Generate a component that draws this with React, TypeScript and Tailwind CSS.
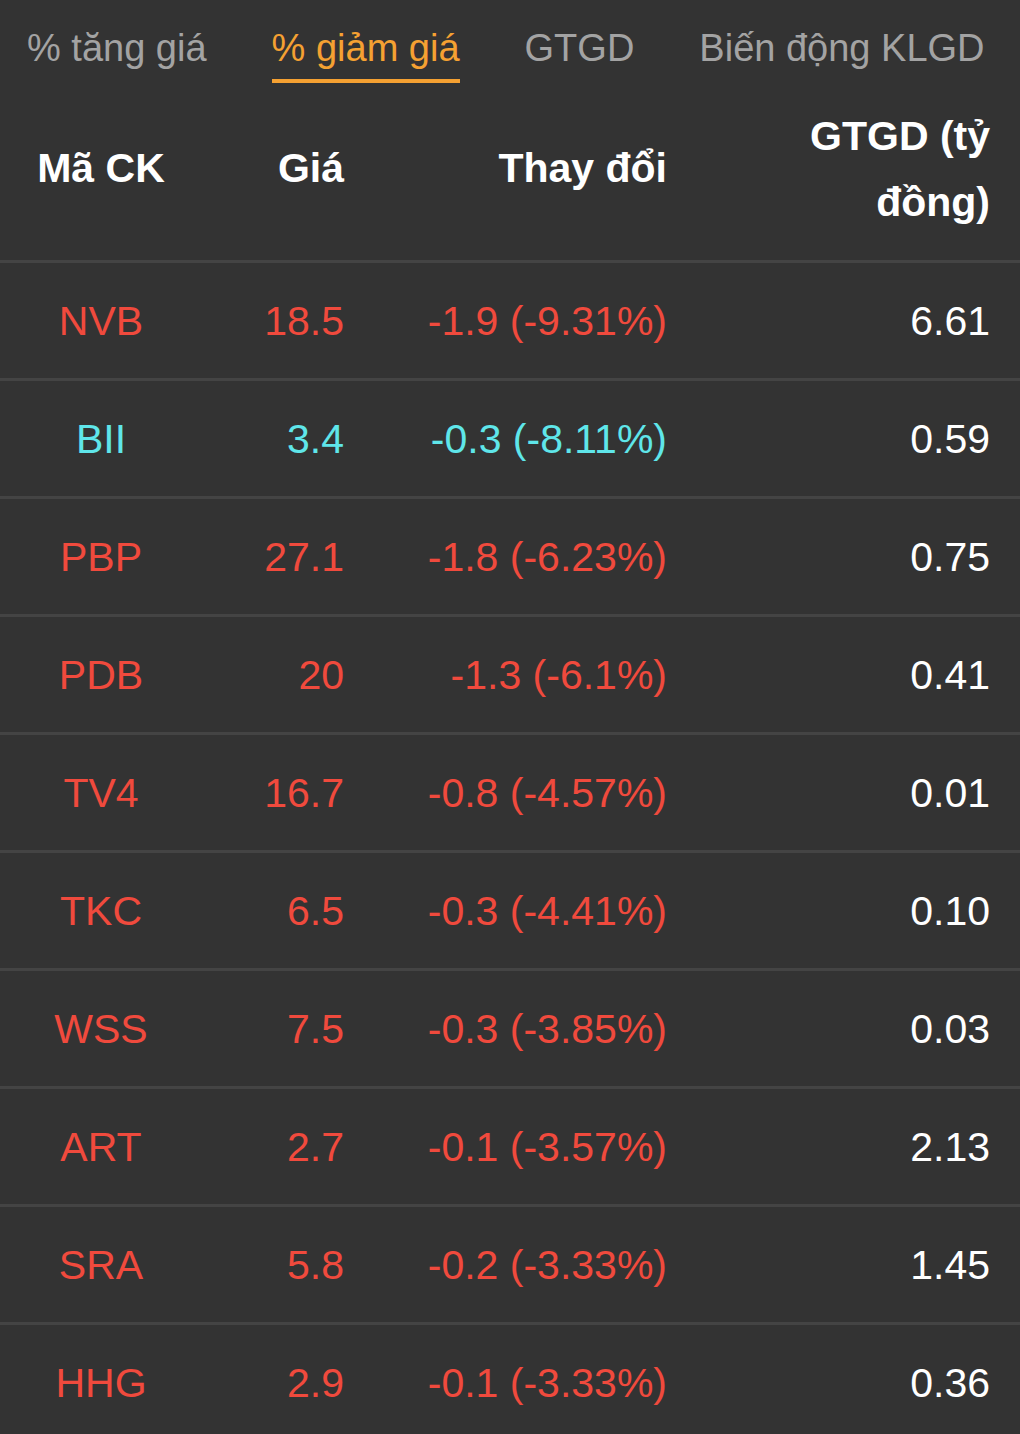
const rows = [
  { code: "NVB", price: "18.5", change: "-1.9 (-9.31%)", value: "6.61", tone: "red" },
  { code: "BII", price: "3.4", change: "-0.3 (-8.11%)", value: "0.59", tone: "cyan" },
  { code: "PBP", price: "27.1", change: "-1.8 (-6.23%)", value: "0.75", tone: "red" },
  { code: "PDB", price: "20", change: "-1.3 (-6.1%)", value: "0.41", tone: "red" },
  { code: "TV4", price: "16.7", change: "-0.8 (-4.57%)", value: "0.01", tone: "red" },
  { code: "TKC", price: "6.5", change: "-0.3 (-4.41%)", value: "0.10", tone: "red" },
  { code: "WSS", price: "7.5", change: "-0.3 (-3.85%)", value: "0.03", tone: "red" },
  { code: "ART", price: "2.7", change: "-0.1 (-3.57%)", value: "2.13", tone: "red" },
  { code: "SRA", price: "5.8", change: "-0.2 (-3.33%)", value: "1.45", tone: "red" },
  { code: "HHG", price: "2.9", change: "-0.1 (-3.33%)", value: "0.36", tone: "red" },
];

const tabs = ["% tăng giá", "% giảm giá", "GTGD", "Biến động KLGD"];

const App = () => {
  return (
    <div className="w-[1020px] min-h-[1434px] bg-[#333333] font-['Liberation_Sans',Arial,sans-serif] overflow-hidden">
      <div className="flex items-start gap-[65px] pl-[27px] h-[96px]">
        {tabs.map((t, i) => (
          <div key={t} className="flex flex-col pt-[25px]">
            <span
              className={
                i === 1
                  ? "text-[38px] leading-[46px] text-[#f5a132] whitespace-nowrap"
                  : "text-[38px] leading-[46px] text-[#a3a3a3] whitespace-nowrap"
              }
            >
              {t}
            </span>
            {i === 1 && <div className="h-[4px] bg-[#f5a132] mt-[8px]" />}
          </div>
        ))}
      </div>
      <div className="grid grid-cols-[202px_142px_323px_323px] items-center h-[167px] pb-[18px] text-white font-bold text-[41px] border-b-[3px] border-[#444444]">
        <div className="text-center">Mã CK</div>
        <div className="text-right">Giá</div>
        <div className="text-right">Thay đổi</div>
        <div className="text-right leading-[66px]">
          GTGD (tỷ
          <br />
          đồng)
        </div>
      </div>
      {rows.map(r => {
        const color = r.tone === "cyan" ? "text-[#5fe6ea]" : "text-[#f04a3d]";
        return (
          <div
            key={r.code}
            className="grid grid-cols-[202px_142px_323px_323px] items-center h-[118px] pt-[3px] text-[41px] border-b-[3px] border-[#444444]"
          >
            <div className={`text-center ${color}`}>{r.code}</div>
            <div className={`text-right ${color}`}>{r.price}</div>
            <div className={`text-right ${color}`}>{r.change}</div>
            <div className="text-right text-white">{r.value}</div>
          </div>
        );
      })}
    </div>
  );
};

export default App;
